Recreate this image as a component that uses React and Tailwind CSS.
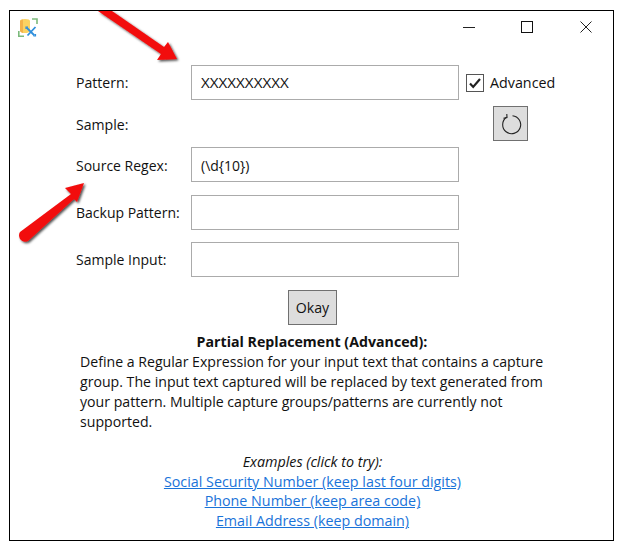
const font = { fontFamily: '"Open Sans", "Noto Sans", sans-serif' };

function Field({ label, value, mt, shift }) {
  return (
    <div className={`flex items-center ${mt}`}>
      <div className={`w-[115px] text-[14px] text-[#111] ${shift}`}>{label}</div>
      <div className={`flex h-[35px] w-[268px] items-center border border-[#ababab] bg-white pl-[9px] text-[14px] text-[#111] ${shift}`}>{value}</div>
    </div>
  );
}

function Arrows() {
  return (
    <svg className="absolute left-0 top-0" width="630" height="547" viewBox="0 0 630 547">
      <defs>
        <filter id="s" x="-20%" y="-20%" width="140%" height="140%">
          <feDropShadow dx="1.5" dy="1.5" stdDeviation="1.2" floodColor="#000" floodOpacity="0.7" />
        </filter>
      </defs>
      <g filter="url(#s)" fill="#f20d0d">
        <path d="M98 11 L112 11 L164 47 L168 42 L177 59 L157 60 L161 54 Z" />
        <path d="M20 232 L71 194 L65 188 L84 183 L77 202 L74 199 L28 241 Q23 243 20 239 Q18 235 20 232 Z" />
      </g>
    </svg>
  );
}

function AppIcon() {
  return (
    <svg width="20" height="20" viewBox="0 0 20 20" fill="none">
      <path d="M.8 13v5.200H6M14 1h5v5" stroke="#7cba7c" strokeWidth="1.600" />
      <path d="M2 3q0-2 5-2t5 2v10q-1 2-5 2t-5-2z" fill="#fbd262" />
      <path d="M2 3v10q1 1.500 3 2V1.500Q2 2 2 3z" fill="#f4b24a" />
      <path d="M8.500 9.500l8 8M17.500 9l-8 8.500" stroke="#2f8fdc" strokeWidth="1.800" />
      <path d="M8 11V9h2M15.500 18h2v-2" stroke="#2f8fdc" strokeWidth="1.200" />
    </svg>
  );
}

export default function App() {
  return (
    <div className="relative h-[547px] w-[630px] overflow-hidden bg-white" style={font}>
      <div className="ml-[9px] mt-[10px] flex h-[531px] w-[605px] flex-col border border-black bg-white text-[#111]">
        <div className="flex h-[32px] items-center justify-between pl-[8px]">
          <div className="pt-[1px]"><AppIcon /></div>
          <div className="flex items-center pr-[21px]">
            <div className="h-px w-[12px] bg-[#222]" />
            <div className="ml-[46px] h-[12px] w-[12px] border border-[#111]" />
            <svg className="ml-[47px]" width="12" height="12" viewBox="0 0 12 12">
              <path d="M.5.5l11 11M11.500.5l-11 11" stroke="#222" strokeWidth="1" />
            </svg>
          </div>
        </div>

        <div className="relative ml-[66px]">
          <div className="flex items-center pt-[22px]">
            <div className="w-[115px] text-[14.100px]">Pattern:</div>
            <div className="flex h-[35px] w-[268px] items-center border border-[#ababab] pl-[9px] text-[15.200px]">XXXXXXXXXX</div>
            <div className="ml-[7px] flex h-[18px] w-[18px] items-center justify-center border border-[#555]">
              <svg width="14" height="14" viewBox="0 0 14 14">
                <path d="M2 7.500l3.200 3.400L12 3" fill="none" stroke="#222" strokeWidth="2.200" />
              </svg>
            </div>
            <div className="ml-[6px] text-[14.300px]">Advanced</div>
          </div>

          <div className="flex h-[47px] items-start">
            <div className="mt-[14px] w-[417px] text-[14.100px]">Sample:</div>
            <div className="mt-[6px] flex h-[35px] w-[35px] items-center justify-center border border-[#707070] bg-[#dddddd]">
              <svg width="22" height="22" viewBox="0 0 22 22" fill="none" stroke="#222" strokeWidth="1.100">
                <path d="M6.500 4.300A9 9 0 1 0 12.500 2.700" />
                <path d="M6.800 1l.2 3.600-3.600.6" />
              </svg>
            </div>
          </div>

          <Field label="Source Regex:" value="(\d{10})" shift="pt-[2px]" />
          <Field label="Backup Pattern:" value="" mt="mt-[13px]" />
          <Field label="Sample Input:" value="" mt="mt-[12px]" />
        </div>

        <div className="mt-[13px] flex justify-center pl-[2px]">
          <div className="flex h-[35px] w-[49px] items-center justify-center border border-[#707070] bg-[#dddddd] text-[14.200px]">Okay</div>
        </div>

        <div className="mt-[7px] pl-[1px] text-center text-[14.200px] font-bold leading-[20px]">Partial Replacement (Advanced):</div>
        <div className="ml-[70px] w-[480px] text-[14.130px] leading-[20px]">
          Define a Regular Expression for your input text that contains a capture group. The input text captured will be replaced by text generated from your pattern. Multiple capture groups/patterns are currently not supported.
        </div>

        <div className="mt-[20px] flex flex-col items-center pl-[2px] text-[14.300px] leading-[19.700px]">
          <div className="italic">Examples (click to try):</div>
          <a className="text-[#1a73d9] underline">Social Security Number (keep last four digits)</a>
          <a className="text-[#1a73d9] underline">Phone Number (keep area code)</a>
          <a className="text-[#1a73d9] underline">Email Address (keep domain)</a>
        </div>
      </div>
      <Arrows />
    </div>
  );
}
